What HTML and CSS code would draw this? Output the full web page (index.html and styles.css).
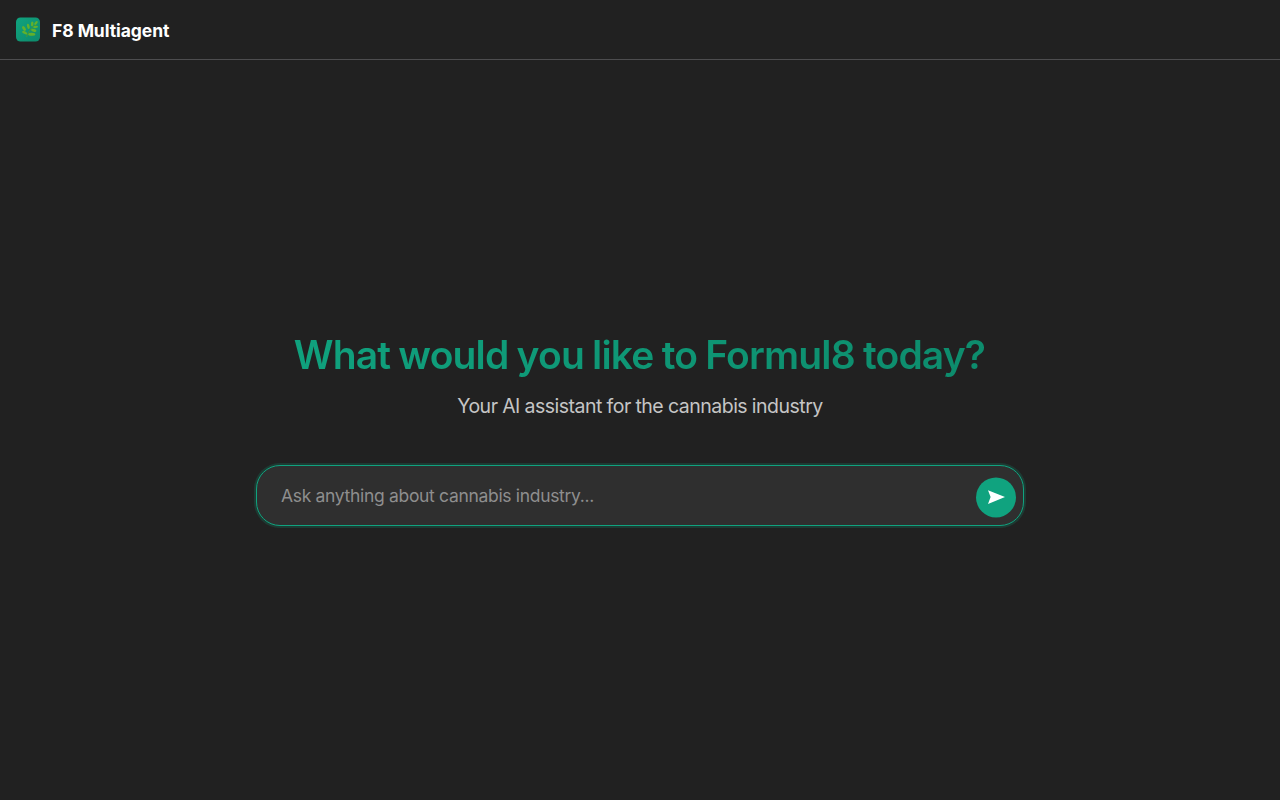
FILE: index.html
```html
<!DOCTYPE html>
<html lang="en">
<head>
<meta charset="utf-8">
<title>F8 Multiagent</title>
<link rel="stylesheet" href="styles.css">
</head>
<body>
<header class="header">
  <svg class="logo" width="24" height="25" viewBox="0 0 24 25" aria-hidden="true">
    <defs>
      <linearGradient id="tile" x1="0" y1="0" x2="1" y2="1">
        <stop offset="0" stop-color="#10a37f"/>
        <stop offset="1" stop-color="#0d8a6b"/>
      </linearGradient>
    </defs>
    <rect y="0.5" width="24" height="24" rx="4.5" fill="url(#tile)"/>
    <path d="M10.5 20Q12 14 20 7" fill="none" stroke="#4c9a2a" stroke-width="0.9"/>
    <g fill="#62b02b">
      <ellipse cx="8" cy="11.5" rx="1.5" ry="2.6" transform="rotate(-35 8 11.5)"/>
      <ellipse cx="8.7" cy="15.7" rx="1.3" ry="2.8" transform="rotate(-62 8.7 15.7)"/>
      <ellipse cx="12.3" cy="9.4" rx="1.3" ry="2.7" transform="rotate(-15 12.3 9.4)"/>
      <ellipse cx="16.2" cy="7" rx="1.3" ry="2.4" transform="rotate(5 16.2 7)"/>
      <ellipse cx="20" cy="6" rx="1.2" ry="2.3" transform="rotate(40 20 6)"/>
      <ellipse cx="19.6" cy="9.9" rx="1.2" ry="2.4" transform="rotate(82 19.6 9.9)"/>
      <ellipse cx="17.8" cy="13.4" rx="1.4" ry="2.7" transform="rotate(103 17.8 13.4)"/>
      <ellipse cx="15.8" cy="17.3" rx="1.5" ry="3.6" transform="rotate(92 15.8 17.3)"/>
    </g>
  </svg>
  <span class="brand">F8 Multiagent</span>
</header>
<main class="main">
  <h1 class="title">What would you like to Formul8 today?</h1>
  <p class="subtitle">Your AI assistant for the cannabis industry</p>
  <form class="composer">
    <input class="prompt" type="text" placeholder="Ask anything about cannabis industry...">
    <button class="send" type="button" aria-label="Send">
      <svg width="40" height="40" viewBox="0 0 40 40"><circle cx="20" cy="20.4" r="20" fill="#10a37f"/><path d="M12 13.2 29 20 12 27 14.6 20Z" fill="#fff"/></svg>
    </button>
  </form>
</main>
</body>
</html>
```
FILE: styles.css
```css
* { box-sizing: border-box; }
body {
  margin: 0;
  height: 100vh;
  display: flex;
  flex-direction: column;
  background: #212121;
  color: #fff;
  font-family: Inter, "Liberation Sans", sans-serif;
}
.header {
  height: 60px;
  display: flex;
  align-items: center;
  gap: 12px;
  padding: 0 16px;
  border-bottom: 1px solid #4d4d4f;
}
.logo { display: block; }
.brand {
  font-size: 17.5px;
  line-height: 24px;
  padding-top: 2px;
  font-weight: 650;
  letter-spacing: -0.06px;
  white-space: nowrap;
}
.main {
  width: 768px;
  margin: 0 auto;
  padding-top: 271px;
  text-align: center;
}
.title {
  margin: 0;
  padding-right: 1px;
  font-size: 39px;
  line-height: 48px;
  font-weight: 640;
  letter-spacing: -0.85px;
  word-spacing: -0.8px;
  white-space: nowrap;
  color: transparent;
  background: linear-gradient(135deg, #10a37f, #0d8a6b);
  background-clip: text;
  -webkit-background-clip: text;
}
.subtitle {
  margin: 15px 0 47px;
  font-size: 19.5px;
  line-height: 24px;
  font-weight: 440;
  letter-spacing: -0.5px;
  word-spacing: -0.3px;
  color: #c5c5c5;
}
.composer {
  height: 61px;
  display: flex;
  align-items: center;
  padding: 3px 7px 0 24px;
  border: 1px solid #10a37f;
  border-radius: 24px;
  background: #2f2f2f;
  box-shadow: 0 0 0 2px rgba(16, 163, 127, 0.2);
}
.prompt {
  flex: 1;
  min-width: 0;
  height: 24px;
  margin-top: -3px;
  padding: 0;
  border: 0;
  outline: 0;
  background: none;
  color: #fff;
  font: 440 17.5px/24px Inter, "Liberation Sans", sans-serif;
  letter-spacing: -0.32px;
}
.prompt::placeholder { color: #8e8e8e; }
.send {
  width: 40px;
  height: 40px;
  padding: 0;
  border: 0;
  background: none;
}
.send svg { display: block; overflow: visible; }
```
